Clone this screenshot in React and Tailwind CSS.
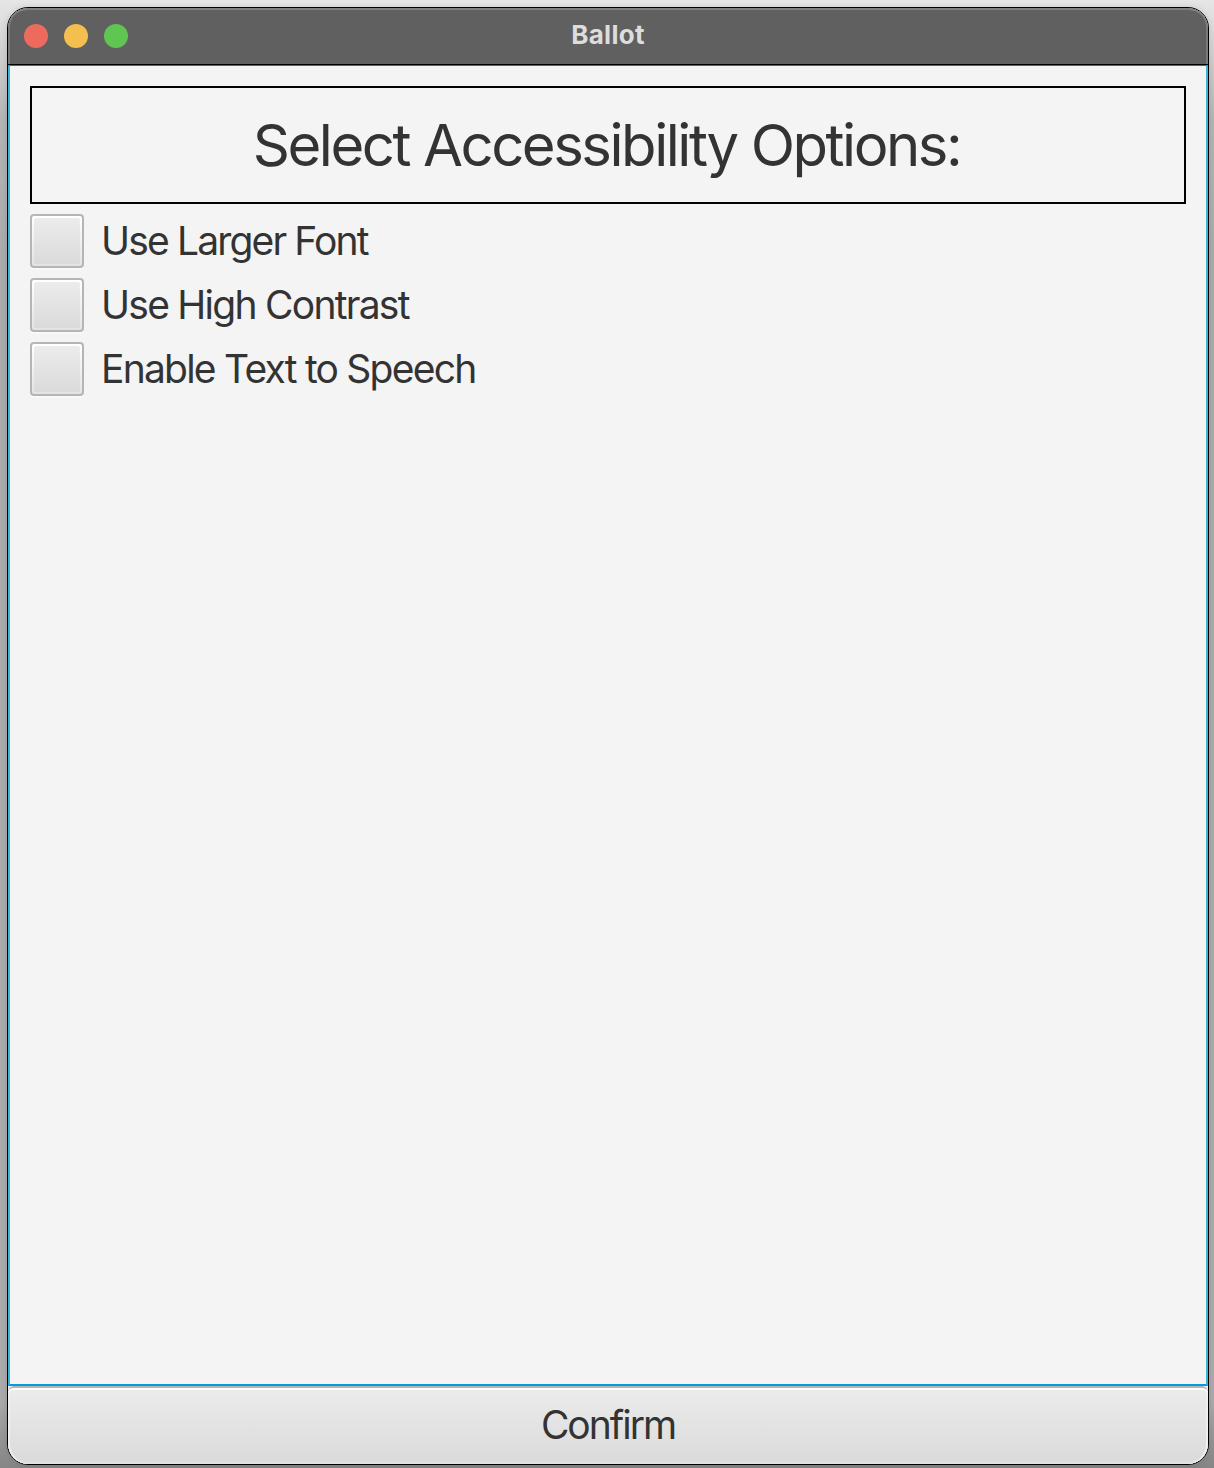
const OPTIONS = [
  { label: "Use Larger Font", tracking: "tracking-[-1.84px]" },
  { label: "Use High Contrast", tracking: "tracking-[-1.74px]" },
  { label: "Enable Text to Speech", tracking: "tracking-[-1.77px]" },
];

function CheckRow({ label, tracking }) {
  return (
    <label className="flex h-[54px] items-center">
      <span className="h-[54px] w-[54px] rounded-[4px] border-2 border-[#b5b5b5] bg-linear-to-b from-white to-[#e3e3e3] p-[2px] shadow-[0_2px_0_#f9f9f9]">
        <span className="block h-full w-full rounded-[2px] bg-linear-to-b from-[#ececec] to-[#dadada]" />
      </span>
      <span className={`ml-[17px] whitespace-nowrap text-[39px] leading-[54px] ${tracking}`}>{label}</span>
    </label>
  );
}

export default function App() {
  return (
    <div className="h-[1468px] w-[1214px] overflow-hidden bg-[linear-gradient(to_bottom,#e6e6e6_0,#dadada_30px,#b4b4b4_120px,#ababab_250px,#ababab_1400px,#858585_1468px)] pl-[7px] pt-[7px] font-['Inter',sans-serif] text-[#333333]">
      <div className="flex h-[1458px] w-[1202px] flex-col overflow-hidden rounded-[21px] border border-black bg-[#f4f4f4] shadow-[0_0_6px_rgba(0,0,0,0.12)]">
        <header className="flex h-[57px] shrink-0 items-center rounded-t-[20px] border-b border-black bg-[#606060] shadow-[inset_0_2px_0_#808080,inset_2px_0_0_#7a7a7a,inset_-2px_0_0_#7a7a7a]">
          <div className="flex w-[200px] gap-4 pl-4">
            <span className="h-6 w-6 rounded-full bg-[#ed6a5e]" />
            <span className="h-6 w-6 rounded-full bg-[#f5bf4f]" />
            <span className="h-6 w-6 rounded-full bg-[#61c554]" />
          </div>
          <h1 className="flex-1 pb-[3px] text-center text-[26px] font-bold leading-[30px] tracking-[0.3px] text-[#dddddd]">Ballot</h1>
          <div className="w-[200px]" />
        </header>
        <main className="flex h-[1321px] shrink-0 flex-col gap-[10px] border-x-2 border-b-2 border-t border-x-[#3bb4de] border-b-[#039ed3] border-t-[#0f7da3] px-5 pt-5">
          <h2 className="flex h-[118px] shrink-0 items-center justify-center border-2 border-black pr-[3px] text-[58px] leading-[70px] tracking-[-2.45px]">
            <span>Select Accessibility Options:</span>
          </h2>
          {OPTIONS.map((option) => (
            <CheckRow key={option.label} {...option} />
          ))}
        </main>
        <button className="flex-1 rounded-t-[6px] rounded-b-[20px] border-t-2 border-[#b5b5b5] bg-linear-to-b from-[#ececec] to-[#dadada] pb-[2px] text-[39px] leading-[54px] tracking-[-2px] shadow-[inset_0_2px_0_#fff,inset_2px_0_0_#f0f0f0,inset_-2px_0_0_#f0f0f0,inset_0_-2px_0_#e3e3e3]">
          Confirm
        </button>
      </div>
    </div>
  );
}
